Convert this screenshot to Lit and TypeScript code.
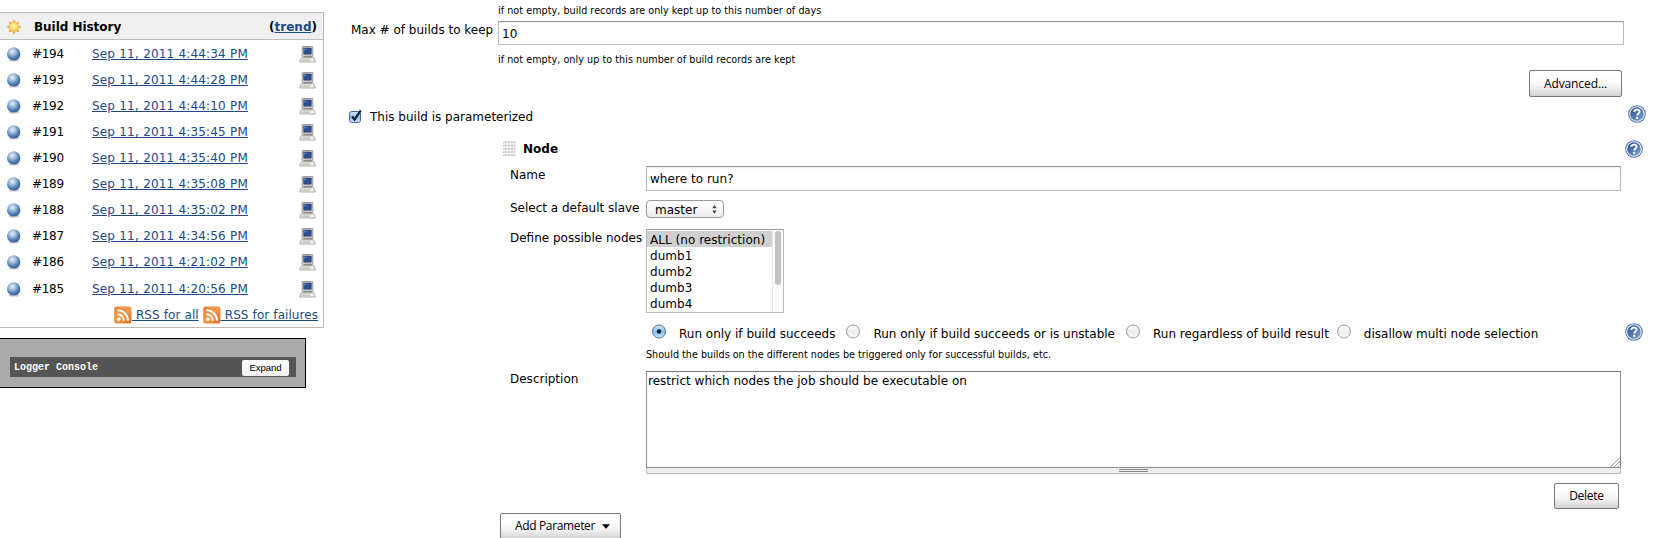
import { LitElement, html, css, svg } from "lit";
import { customElement } from "lit/decorators.js";

const builds = [
  ["#194", "Sep 11, 2011 4:44:34 PM"],
  ["#193", "Sep 11, 2011 4:44:28 PM"],
  ["#192", "Sep 11, 2011 4:44:10 PM"],
  ["#191", "Sep 11, 2011 4:35:45 PM"],
  ["#190", "Sep 11, 2011 4:35:40 PM"],
  ["#189", "Sep 11, 2011 4:35:08 PM"],
  ["#188", "Sep 11, 2011 4:35:02 PM"],
  ["#187", "Sep 11, 2011 4:34:56 PM"],
  ["#186", "Sep 11, 2011 4:21:02 PM"],
  ["#185", "Sep 11, 2011 4:20:56 PM"],
];

const nodes = ["ALL (no restriction)", "dumb1", "dumb2", "dumb3", "dumb4"];

const sun = html`<svg width="16" height="16" viewBox="0 0 16 16">
  <defs><radialGradient id="s" cx=".45" cy=".4" r=".6"><stop offset="0" stop-color="#fff6a8"/><stop offset=".6" stop-color="#fde07a"/><stop offset="1" stop-color="#f6b84c"/></radialGradient></defs>
  ${[0, 45, 90, 135, 180, 225, 270, 315].map((a) => svg`<path d="M6.5 3.6 8 .3l1.5 3.3z" fill="#eda845" transform=${`rotate(${a} 8 8)`}/>`)}
  <circle cx="8" cy="8" r="4.5" fill="url(#s)" stroke="#eda947" stroke-width=".7"/></svg>`;

const ball = html`<svg width="16" height="16" viewBox="0 0 16 16">
  <defs><radialGradient id="b" cx=".4" cy=".32" r=".68"><stop offset="0" stop-color="#e8f0fa"/><stop offset=".35" stop-color="#a3c0e0"/><stop offset=".72" stop-color="#5480b6"/><stop offset="1" stop-color="#345f98"/></radialGradient></defs>
  <ellipse cx="8" cy="14.2" rx="5.6" ry="1.5" fill="#000" opacity=".16"/><circle cx="7.7" cy="7.9" r="6.7" fill="url(#b)"/></svg>`;

const computer = html`<svg width="17" height="17" viewBox="0 0 17 17">
  <path d="M3.2.6h10.6v9.6H3.2z" fill="#dededa" stroke="#8d8d87" stroke-width=".9"/>
  <path d="M4.7 2h7.6v6.2H4.7z" fill="#2f4f93" stroke="#203768" stroke-width=".6"/>
  <path d="M5.1 2.4h3L5.1 5z" fill="#5f7fbd"/>
  <path d="M4.5 10.2h8.5v1.6H4.5z" fill="#85857d"/>
  <path d="M2.2 11.7h12.6l1.5 4.3H.7z" fill="#efefeb" stroke="#9c9c94" stroke-width=".8"/>
  <path d="M3 13.1h8.8M2.6 14.5h8.2" stroke="#b4b4ac" stroke-width=".7"/></svg>`;

const rss = html`<svg width="18" height="18" viewBox="0 0 18 18">
  <defs><linearGradient id="r" x2="1" y2="1"><stop offset="0" stop-color="#e5853a"/><stop offset=".5" stop-color="#f29a48"/><stop offset="1" stop-color="#d96a26"/></linearGradient></defs>
  <rect x=".2" y=".4" width="17.2" height="17.2" rx="2.2" fill="url(#r)"/>
  <circle cx="4.9" cy="13.2" r="1.7" fill="#fff"/>
  <path d="M3.4 8.2a6.4 6.4 0 0 1 6.4 6.5M3.4 4.1a10.6 10.6 0 0 1 10.6 10.6" fill="none" stroke="#fff" stroke-width="1.9"/></svg>`;

const help = html`<svg width="18" height="18" viewBox="0 0 18 18">
  <defs><linearGradient id="h" x2="1" y2="1"><stop offset="0" stop-color="#23498a"/><stop offset="1" stop-color="#86a8d4"/></linearGradient></defs>
  <circle cx="9" cy="9" r="8.8" fill="#4f73ab"/><circle cx="9" cy="9" r="7.3" fill="url(#h)" stroke="#e6edf7" stroke-width="1.1"/>
  <path d="M6.3 7C6.4 5.4 7.5 4.7 9 4.7s2.6.8 2.6 2.1c0 1.7-2.3 1.8-2.3 3.6" fill="none" stroke="#fff" stroke-width="1.8"/>
  <circle cx="9.2" cy="12.9" r="1.15" fill="#fff"/></svg>`;

const checkbox = html`<svg width="14" height="15" viewBox="0 0 14 15">
  <defs><linearGradient id="c" x2="0" y2="1"><stop offset="0" stop-color="#d3e6f8"/><stop offset=".5" stop-color="#8fc0ee"/><stop offset="1" stop-color="#c5ecfd"/></linearGradient></defs>
  <rect x=".5" y="2.5" width="11" height="11" rx="2" fill="url(#c)" stroke="#46669a"/>
  <path d="M3 7.3 5.5 10.6 11.8 1.3" fill="none" stroke="#0b1a35" stroke-width="2.1"/></svg>`;

const grip = html`<svg width="13" height="16" viewBox="0 0 13 16">
  <defs><pattern id="g" width="3.2" height="3.2" patternUnits="userSpaceOnUse"><path d="M0 1.6h1.2M1.7 .6h.8v1.6" fill="none" stroke="#aaa" stroke-width="1"/></pattern></defs>
  <rect width="12.5" height="15.6" fill="url(#g)"/></svg>`;

const radio = (on: boolean) => html`<svg width="15" height="15" viewBox="0 0 15 15">
  <defs>
    <linearGradient id="on" x2="0" y2="1"><stop offset="0" stop-color="#dcebfa"/><stop offset=".5" stop-color="#86bcf0"/><stop offset="1" stop-color="#c3ecff"/></linearGradient>
    <linearGradient id="off" x2="0" y2="1"><stop offset="0" stop-color="#fff"/><stop offset=".5" stop-color="#ececec"/><stop offset="1" stop-color="#fbfbfb"/></linearGradient>
  </defs>
  <circle cx="7" cy="7.5" r="6.5" fill=${on ? "url(#on)" : "url(#off)"} stroke=${on ? "#54709c" : "#999"}/>
  ${on ? svg`<circle cx="7" cy="7.5" r="2.2" fill="#0c1e3c"/>` : ""}</svg>`;

@customElement("app-root")
export class AppRoot extends LitElement {
  static styles = css`
    :host { display: block; width: 1657px; height: 538px; overflow: hidden; background: #fff; color: #000; font: 12px/16px "DejaVu Sans", sans-serif; }
    * { box-sizing: border-box; }
    svg { display: block; flex: none; }
    span { white-space: nowrap; }
    .page { display: flex; height: 538px; }
    .side { width: 324px; flex: none; padding-top: 12px; }
    .history { border: 1px solid #bbb; border-left: 0; height: 316px; }
    .head { display: flex; align-items: center; height: 27px; background: #efefef; border-bottom: 1px solid #bbb; padding: 2px 6px 0 6px; font-weight: bold; }
    .head .title { margin-left: 12px; flex: 1; letter-spacing: -.04px; }
    .row { display: flex; height: 26px; align-items: center; padding: 2px 7px 0 6px; }
    .row:nth-last-child(2) { height: 27px; padding-top: 3px; }
    .num { width: 60px; margin-left: 10px; letter-spacing: -.3px; }
    .when { flex: 1; letter-spacing: .13px; word-spacing: .4px; }
    a { color: #204a87; text-decoration: underline; white-space: pre; }
    .feeds { display: flex; justify-content: flex-end; gap: 4px; padding: 5px 5px 0 0; }
    .feed { display: flex; align-items: center; letter-spacing: .06px; word-spacing: .2px; }
    .logger { margin-top: 10px; width: 306px; height: 50px; border: 1px solid #000; border-left: 0; background: #aaa; padding: 18px 9px 0 10px; }
    .bar { display: flex; align-items: center; justify-content: space-between; height: 20px; background: #555; color: #fff; padding: 0 7px 0 4px; font: bold 10px/12px "Liberation Mono", monospace; }
    .bar span { padding-top: 2px; }
    .expand { height: 16px; width: 47px; margin-top: 1px; border-radius: 2px; background: linear-gradient(#fff, #f0f0f0); color: #000; text-align: center; font: 9.6px/16px "Liberation Sans", sans-serif; letter-spacing: -.1px; }

    .main { flex: 1; display: flex; flex-direction: column; padding-left: 25px; }
    .line { display: flex; flex: none; align-items: flex-start; }
    .small { font-size: 9.6px; line-height: 12px; letter-spacing: .05px; }
    .field { flex: none; border: 1px solid #bbb; border-top-color: #999; box-shadow: inset 0 1px 2px #eee; padding: 0 3px; }
    .btn { flex: none; border: 1px solid #777; border-radius: 2px; background: linear-gradient(#fff 25%, #f4f4f4 60%, #d2d2d2); text-align: center; font-family: "Open Sans", sans-serif; }

    .max { height: 25px; padding-left: 2px; }
    .max .label { width: 147px; padding-top: 1px; }
    .max .field { width: 1126px; height: 24px; line-height: 24px; }
    .first { height: 21px; padding: 5px 0 0 149px; }
    .second { height: 24px; padding: 8px 0 0 149px; }
    .adv { height: 35px; justify-content: flex-end; padding-right: 35px; }
    .adv .btn { width: 93px; height: 27px; line-height: 25px; letter-spacing: -.1px; }
    .param { height: 35px; }
    .param .check { margin-top: 4px; }
    .param span { margin: 4px auto 0 7px; }
    .param > svg:last-child { margin-right: 11px; }
    .node { height: 26px; padding-left: 154px; font-weight: bold; }
    .node span { margin: 1px auto 0 7px; }
    .node > svg:last-child, .radios > svg:last-child { margin-right: 14px; }
    .node > svg:first-child { margin-top: 1px; }
    .key { width: 136px; flex: none; }
    .name, .slave, .possible, .desc { padding-left: 161px; }
    .name { height: 34px; }
    .name .key, .possible .key { padding-top: 1px; }
    .name .field { width: 975px; height: 25px; line-height: 25px; }
    .slave { height: 29px; }
    .select { display: flex; align-items: center; justify-content: space-between; width: 78px; height: 18px; border: 1px solid #999; border-radius: 4px; background: linear-gradient(#fff, #f6f6f6 50%, #ececec); padding: 1px 6px 0 8px; }
    .possible { height: 94px; }
    .list { display: flex; width: 138px; height: 84px; border: 1px solid #bbb; border-top-color: #999; padding-top: 1px; }
    .opts { flex: 1; }
    .opt { height: 16px; line-height: 18px; padding-left: 3px; }
    .opt.on { background: #d0d0d0; }
    .track { width: 11px; background: #fafafa; border-left: 1px solid #e8e8e8; padding: 0 0 0 2px; }
    .thumb { width: 6px; height: 54px; border-radius: 3px; background: #c1c1c1; }
    .radios { height: 26px; padding-left: 303px; }
    .radios > svg { margin-top: 1px; }
    .radios > svg:last-child { margin-top: 0; margin-left: auto; }
    .radios span { margin: 3px 0 0 12px; }
    .radios .g1 { width: 11px; }
    .hint { height: 22px; padding: 0 0 0 297px; letter-spacing: .02px; }
    .desc { height: 112px; }
    .area { width: 975px; }
    .text { display: flex; flex-direction: column; justify-content: space-between; height: 97px; border: 1px solid #8e8e8e; border-top-color: #777; padding: 1px 0 0 1px; }
    .text svg { align-self: flex-end; }
    .text span { letter-spacing: .02px; }
    .handle { display: flex; justify-content: center; align-items: center; height: 6px; border: 1px solid #bbb; border-top: 0; background: #eee; }
    .handle i { width: 29px; height: 3px; border: solid #888; border-width: 1px 0; }
    .del { height: 30px; justify-content: flex-end; padding-right: 38px; }
    .del .btn { width: 65px; height: 26px; line-height: 24px; letter-spacing: -.25px; }
    .add { padding-left: 151px; }
    .add .btn { display: flex; align-items: center; width: 121px; height: 27px; padding: 0 0 1px 14px; letter-spacing: -.35px; }
    .add svg { margin-left: 7px; }
    .opt, .name .field { letter-spacing: .04px; }
  `;

  render() {
    return html`<div class="page">
      <div class="side">
        <div class="history">
          <div class="head">${sun}<span class="title">Build History</span><span>(<a>trend</a>)</span></div>
          ${builds.map(([n, d]) => html`<div class="row">${ball}<span class="num">${n}</span><span class="when"><a>${d}</a></span>${computer}</div>`)}
          <div class="feeds"><span class="feed">${rss}<a> RSS for all</a></span><span class="feed">${rss}<a> RSS for failures</a></span></div>
        </div>
        <div class="logger"><div class="bar"><span>Logger Console</span><div class="expand">Expand</div></div></div>
      </div>
      <div class="main">
        <div class="line first"><span class="small">if not empty, build records are only kept up to this number of days</span></div>
        <div class="line max"><span class="label">Max # of builds to keep</span><div class="field">10</div></div>
        <div class="line second"><span class="small">if not empty, only up to this number of build records are kept</span></div>
        <div class="line adv"><div class="btn">Advanced...</div></div>
        <div class="line param"><div class="check">${checkbox}</div><span>This build is parameterized</span>${help}</div>
        <div class="line node">${grip}<span>Node</span>${help}</div>
        <div class="line name"><span class="key">Name</span><div class="field">where to run?</div></div>
        <div class="line slave"><span class="key">Select a default slave</span>
          <div class="select"><span>master</span><svg width="5" height="9" viewBox="0 0 5 9"><path d="M.3 3.3 2.5 0l2.2 3.3zM.3 5.4 2.5 8.7l2.2-3.3z" fill="#444"/></svg></div></div>
        <div class="line possible"><span class="key">Define possible nodes</span>
          <div class="list"><div class="opts">${nodes.map((n, i) => html`<div class="opt ${i === 0 ? "on" : ""}">${n}</div>`)}</div><div class="track"><div class="thumb"></div></div></div></div>
        <div class="line radios">
          ${radio(true)}<span>Run only if build succeeds</span>
          <svg class="g1" width="11" height="1"></svg>${radio(false)}<span>Run only if build succeeds or is unstable</span>
          <svg width="11" height="1"></svg>${radio(false)}<span>Run regardless of build result</span>
          <svg width="8" height="1"></svg>${radio(false)}<span>disallow multi node selection</span>
          ${help}</div>
        <div class="line hint small"><span>Should the builds on the different nodes be triggered only for successful builds, etc.</span></div>
        <div class="line desc"><span class="key">Description</span>
          <div class="area"><div class="text"><span>restrict which nodes the job should be executable on</span>
            <svg width="10" height="10" viewBox="0 0 10 10"><path d="M.5 10 10 .5M4 10l6-6M7.3 10 10 7.3" stroke="#8a8a8a" stroke-width=".9"/></svg></div>
            <div class="handle"><i></i></div></div></div>
        <div class="line del"><div class="btn">Delete</div></div>
        <div class="line add"><div class="btn">Add Parameter<svg width="8" height="5" viewBox="0 0 8 5"><path d="M0 .3h8L4 4.7z"/></svg></div></div>
      </div>
    </div>`;
  }
}
